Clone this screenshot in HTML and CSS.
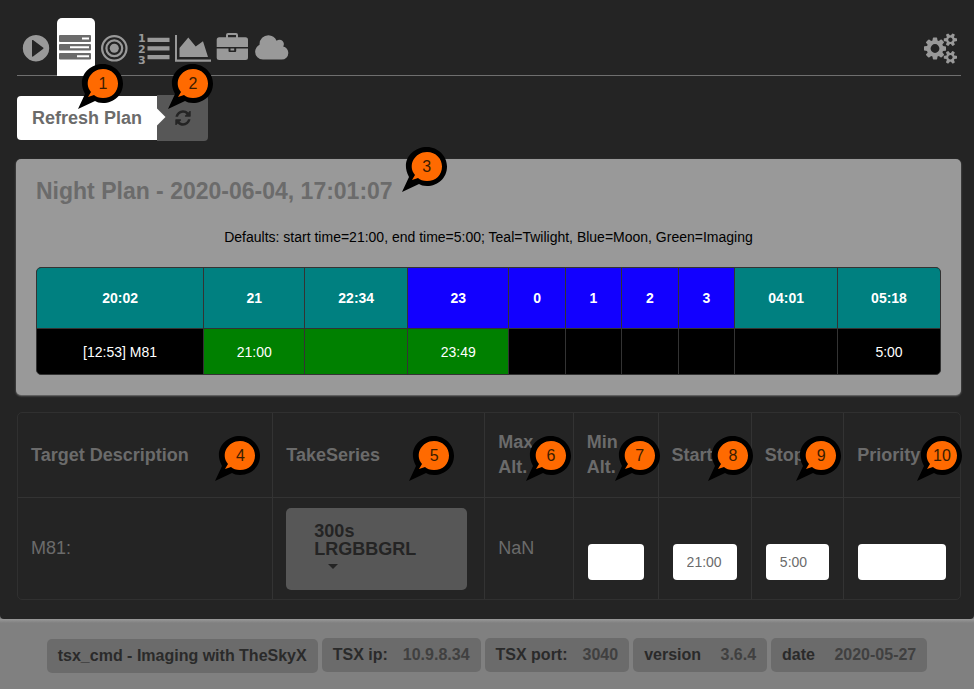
FILE: index.html
```html
<!DOCTYPE html>
<html lang="en">
<head>
<meta charset="utf-8">
<title>tsx_cmd - Night Plan</title>
<link rel="stylesheet" href="styles.css">
</head>
<body>
<svg class="defs" aria-hidden="true">
  <symbol id="bubble" viewBox="0 0 45 45">
    <path fill="#000" d="M0 45 L7 30 C-2 14 10 0 25 0 C36 0 45 9 45 19.500 C45 31 36 39 25 39 C21 39 19 38 17 37 Z"/>
    <path fill="#ff6a00" d="M10 33 L13 28 C5 18 13 5 25 5 C34 5 40 12 40 19.500 C40 28 34 34 25 34 C21 34 18 33 16 31 Z"/>
  </symbol>
</svg>
<main class="page">
  <nav class="nav" aria-label="Main">
    <a class="nav-item" href="#run" aria-label="Run"><svg viewBox="0 0 39 58"><path fill-rule="evenodd" d="M19 17a13.200 13.200 0 1 0 .01 0zM15 22.500v15.500q0 1 1 .500l10-7.500q1-.7 0-1.400l-10-7.500q-1-.5-1 .400z"/></svg></a>
    <a class="nav-item active" href="#plan" aria-label="Plan"><svg viewBox="0 0 39 58"><path fill-rule="evenodd" d="M4 17h30q1 0 1 1v5q0 1-1 1H4q-1 0-1-1v-5q0-1 1-1zM26 19.500v2h7v-2zM4 26h30q1 0 1 1v4.500q0 1-1 1H4q-1 0-1-1V27q0-1 1-1zM14 28.200v2h19v-2zM4 35h30q1 0 1 1v4.500q0 1-1 1H4q-1 0-1-1V36q0-1 1-1zM21 37.200v2h12v-2z"/></svg></a>
    <a class="nav-item" href="#target" aria-label="Target"><svg viewBox="0 0 39 58"><g class="ring"><circle cx="19.300" cy="30.300" r="12.200"/><circle cx="19.300" cy="30.300" r="7.900"/></g><circle cx="19.300" cy="30.300" r="4.500"/></svg></a>
    <a class="nav-item" href="#list" aria-label="List"><svg viewBox="0 0 39 58"><path d="M13.500 19.700h22v4.300h-22zM13.500 28.300h22v4.300h-22zM13.500 37h22v4.300h-22z"/><g class="digits"><text x="4" y="24">1</text><text x="4" y="35">2</text><text x="4" y="46">3</text></g></svg></a>
    <a class="nav-item" href="#chart" aria-label="Chart"><svg viewBox="0 0 39 58"><path d="M2 17h2v24.500h34v2.200H2zM6.500 39v-9l8.800-10.500 7.400 9 7.300-5.200 5 15.700z"/></svg></a>
    <a class="nav-item" href="#tools" aria-label="Tools"><svg viewBox="0 0 39 58"><path fill-rule="evenodd" d="M14 19.300V17q0-2 2-2h8q2 0 2 2v2.300h7.500q2.500 0 2.500 2.500V29H4.700v-7.200q0-2.500 2.500-2.500zM16 17v2.300h8V17zM4.700 30.500H16.500V33q0 1 1 1h5.700q1 0 1-1V30.500H36v9q0 2.500-2.500 2.500H7.200q-2.500 0-2.500-2.500zM18.500 30.500h3.700v2h-3.700z"/></svg></a>
    <a class="nav-item" href="#weather" aria-label="Weather"><svg viewBox="0 0 39 58"><path transform="translate(3 15) scale(.0173)" d="M1984 1152q0 159-112.500 271.500t-271.500 112.500h-1088q-185 0-316.500-131.500t-131.500-316.500q0-132 71-241.500t187-163.500q-2-28-2-43 0-212 150-362t362-150q158 0 286.500 88t187.500 230q70-62 166-62 106 0 181 75t75 181q0 75-41 138 129 30 213 134.500t84 239.500z"/></svg></a>
    <a class="nav-settings" href="#settings" aria-label="Settings"><svg viewBox="0 0 1920 1792"><path d="M896 896q0-106-75-181t-181-75-181 75-75 181 75 181 181 75 181-75 75-181zm768 512q0-52-38-90t-90-38-90 38-38 90q0 53 37.500 90.500t90.500 37.500 90.500-37.500 37.500-90.500zm0-1024q0-52-38-90t-90-38-90 38-38 90q0 53 37.500 90.500t90.500 37.500 90.500-37.500 37.500-90.500zm-384 421v185q0 10-7 19.500t-16 10.500l-155 24q-11 35-32 76 34 48 90 115 7 11 7 20 0 12-7 19-23 30-82.500 89.500t-78.500 59.500q-11 0-21-7l-115-90q-37 19-77 31-11 108-23 155-7 24-30 24h-186q-11 0-20-7.500t-10-17.500l-23-153q-34-10-75-31l-118 89q-7 7-20 7-11 0-21-8-144-133-144-160 0-9 7-19 10-14 41-53t47-61q-23-44-35-82l-152-24q-10-1-17-9.500t-7-19.500v-185q0-10 7-19.500t16-10.500l155-24q11-35 32-76-34-48-90-115-7-11-7-20 0-12 7-20 22-30 82-89t79-59q11 0 21 7l115 90q34-18 77-32 11-108 23-154 7-24 30-24h186q11 0 20 7.500t10 17.500l23 153q34 10 75 31l118-89q8-7 20-7 11 0 21 8 144 133 144 160 0 8-7 19-12 16-42 54t-45 60q23 48 34 82l152 23q10 2 17 10.500t7 19.500zm640 533v140q0 16-149 31-12 27-30 52 51 113 51 138 0 4-4 7-122 71-124 71-8 0-46-47t-52-68q-20 2-30 2t-30-2q-14 21-52 68t-46 47q-2 0-124-71-4-3-4-7 0-25 51-138-18-25-30-52-149-15-149-31v-140q0-16 149-31 13-29 30-52-51-113-51-138 0-4 4-7 4-2 35-20t59-34 30-16q8 0 46 46.500t52 67.500q20-2 30-2t30 2q51-71 92-112l6-2q4 0 124 70 4 3 4 7 0 25-51 138 17 23 30 52 149 15 149 31zm0-1024v140q0 16-149 31-12 27-30 52 51 113 51 138 0 4-4 7-122 71-124 71-8 0-46-47t-52-68q-20 2-30 2t-30-2q-14 21-52 68t-46 47q-2 0-124-71-4-3-4-7 0-25 51-138-18-25-30-52-149-15-149-31v-140q0-16 149-31 13-29 30-52-51-113-51-138 0-4 4-7 4-2 35-20t59-34 30-16q8 0 46 46.500t52 67.500q20-2 30-2t30 2q51-71 92-112l6-2q4 0 124 70 4 3 4 7 0 25-51 138 17 23 30 52 149 15 149 31z"/></svg></a>
  </nav>

  <div class="refresh">
    <label class="refresh-label" for="refresh">Refresh Plan</label>
    <button class="refresh-button" id="refresh" type="button"><svg viewBox="0 0 1792 1792" aria-hidden="true"><path d="M1639 1056q0 5-1 7-64 268-268 434.500t-478 166.500q-146 0-282.500-55t-243.500-157l-129 129q-19 19-45 19t-45-19-19-45v-448q0-26 19-45t45-19h448q26 0 45 19t19 45-19 45l-137 137q71 66 161 102t187 36q134 0 250-65t186-179q11-17 53-117 8-23 30-23h192q13 0 22.500 9.500t9.500 22.500zm25-800v448q0 26-19 45t-45 19h-448q-26 0-45-19t-19-45 19-45l138-138q-148-137-349-137-134 0-250 65t-186 179q-11 17-53 117-8 23-30 23h-199q-13 0-22.500-9.500t-9.500-22.500v-7q65-268 270-434.500t480-166.500q146 0 284 55.500t245 156.500l130-129q19-19 45-19t45 19 19 45z"/></svg></button>
    <span class="marker marker-label"><svg><use href="#bubble"/></svg><b>1</b></span>
    <span class="marker marker-button"><svg><use href="#bubble"/></svg><b>2</b></span>
  </div>

  <section class="night">
    <h1 class="night-title">Night Plan - 2020-06-04, 17:01:07<span class="marker marker-title"><svg><use href="#bubble"/></svg><b>3</b></span></h1>
    <p class="night-note">Defaults: start time=21:00, end time=5:00; Teal=Twilight, Blue=Moon, Green=Imaging</p>
    <table class="timeline">
      <colgroup><col class="c-lead"><col class="c-hour"><col class="c-time"><col class="c-hour"><col class="c-slot" span="4"><col class="c-time" span="2"></colgroup>
      <thead><tr><th class="twilight">20:02</th><th class="twilight">21</th><th class="twilight">22:34</th><th class="moon">23</th><th class="moon">0</th><th class="moon">1</th><th class="moon">2</th><th class="moon">3</th><th class="twilight">04:01</th><th class="twilight">05:18</th></tr></thead>
      <tbody><tr><td>[12:53] M81</td><td class="imaging">21:00</td><td class="imaging"></td><td class="imaging">23:49</td><td></td><td></td><td></td><td></td><td></td><td>5:00</td></tr></tbody>
    </table>
  </section>

  <table class="targets">
    <colgroup><col class="t-name"><col class="t-series"><col class="t-max"><col class="t-min"><col class="t-start"><col class="t-stop"><col class="t-priority"></colgroup>
    <thead><tr>
      <th>Target Description<span class="marker marker-name"><svg><use href="#bubble"/></svg><b>4</b></span></th>
      <th>TakeSeries<span class="marker marker-series"><svg><use href="#bubble"/></svg><b>5</b></span></th>
      <th>Max Alt.<span class="marker marker-inset"><svg><use href="#bubble"/></svg><b>6</b></span></th>
      <th>Min Alt.<span class="marker"><svg><use href="#bubble"/></svg><b>7</b></span></th>
      <th>Start<span class="marker"><svg><use href="#bubble"/></svg><b>8</b></span></th>
      <th>Stop<span class="marker marker-inset"><svg><use href="#bubble"/></svg><b>9</b></span></th>
      <th>Priority<span class="marker"><svg><use href="#bubble"/></svg><b>10</b></span></th>
    </tr></thead>
    <tbody><tr>
      <td>M81:</td>
      <td class="series-cell"><button class="series" type="button" aria-haspopup="listbox"><span>300s LRGBBGRL</span><i class="caret"></i></button></td>
      <td>NaN</td>
      <td><div class="field"><input type="text" aria-label="Minimum altitude"></div></td>
      <td><div class="field"><input type="text" aria-label="Start" placeholder="21:00"></div></td>
      <td><div class="field"><input type="text" aria-label="Stop" placeholder="5:00"></div></td>
      <td><div class="field"><input type="text" aria-label="Priority"></div></td>
    </tr></tbody>
  </table>
</main>
<footer class="footer">
  <span class="tag tag-name">tsx_cmd - Imaging with TheSkyX</span>
  <span class="tag">TSX ip:<span class="detail">10.9.8.34</span></span>
  <span class="tag">TSX port:<span class="detail">3040</span></span>
  <span class="tag">version&nbsp;<span class="detail">3.6.4</span></span>
  <span class="tag">date&nbsp;<span class="detail">2020-05-27</span></span>
</footer>
</body>
</html>
```
FILE: styles.css
```css
* { box-sizing: border-box; }

body {
  margin: 0;
  min-height: 100vh;
  background: #808080;
  font-family: "Liberation Sans", Arial, sans-serif;
  font-size: 14px;
}

.defs { position: absolute; width: 0; height: 0; }

.page {
  padding: 18px 13px 19px 17px;
  background: #242424;
  border-radius: 0 0 4px 4px;
}

/* Navigation */
.nav {
  display: flex;
  height: 58px;
  border-bottom: 1px solid #6f6f6f;
}
.nav-item { width: 39px; height: 58px; fill: #999; }
.nav-item svg { display: block; width: 39px; height: 58px; }
.nav-item.active {
  width: 38px;
  margin-left: 1px;
  border-radius: 5px 5px 0 0;
  background: #fff;
  fill: #6b6b6b;
}
.nav-item.active svg { margin-left: -1px; }
.ring { fill: none; stroke: #999; stroke-width: 2.2; }
.digits { font: bold 11px "DejaVu Sans", sans-serif; }
.nav-settings { margin: 15px 4px 0 auto; fill: #999; }
.nav-settings svg { display: block; width: 33px; height: 31px; }

/* Refresh control */
.refresh {
  position: relative;
  display: flex;
  align-items: center;
  width: max-content;
  margin-top: 19px;
}
.refresh-label {
  position: relative;
  padding: 0 15px;
  border-radius: 4px 0 0 4px;
  background: #fff;
  color: #6b6b6b;
  font-size: 18px;
  font-weight: bold;
  line-height: 44px;
}
.refresh-label::after {
  content: "";
  position: absolute;
  top: 15px;
  right: -6px;
  width: 12px;
  height: 12px;
  background: #fff;
  transform: rotate(45deg);
}
.refresh-button {
  width: 51px;
  height: 46px;
  padding: 0 0 0 1px;
  border: 0;
  border-radius: 0 4px 4px 0;
  background: #575757;
  fill: #242424;
}
.refresh-button svg { display: block; width: 18px; height: 18px; margin: 0 auto; }

/* Numbered callouts */
.marker {
  position: absolute;
  z-index: 2;
  top: 23px;
  right: -2px;
  width: 45px;
  height: 45px;
}
.marker svg { display: block; width: 45px; height: 45px; }
.marker b {
  position: absolute;
  top: 0;
  left: 5px;
  width: 40px;
  color: #3a1c00;
  font-size: 16px;
  font-weight: normal;
  line-height: 40px;
  text-align: center;
}
.marker-label { top: -31px; left: 61px; }
.marker-button { top: -31px; left: 151px; }
.marker-title { top: -32px; right: -54px; }
.marker-name { right: 12px; }
.marker-series { right: 30px; }
.marker-inset { right: 2px; }

/* Night plan */
.night {
  margin: 18px 0 0 -1px;
  padding: 20px;
  border-radius: 5px;
  background: #999;
  box-shadow: 0 1px 2px #777;
}
.night-title {
  position: relative;
  width: max-content;
  margin: 0;
  color: #6b6b6b;
  font-size: 23px;
  line-height: 24px;
}
.night-note {
  margin: 25px 0 21px;
  color: #000;
  line-height: 18px;
  text-align: center;
}
.timeline {
  width: 100%;
  table-layout: fixed;
  border: 1px solid #333;
  border-spacing: 0;
  border-radius: 5px;
  background: #000;
  color: #fff;
  overflow: hidden;
}
.c-lead { width: 18.4%; }
.c-hour { width: 11.2%; }
.c-time { width: 11.4%; }
.c-slot { width: 6.25%; }
.timeline th, .timeline td {
  padding: 0;
  border-left: 1px solid #333;
  text-align: center;
}
.timeline th:first-child, .timeline td:first-child { border-left: 0; }
.timeline th { height: 60px; }
.timeline td { height: 46px; border-top: 1px solid #333; }
.twilight { background: #008080; }
.moon { background: #1200ff; }
.imaging { background: #008000; }

/* Target list */
.targets {
  width: 100%;
  margin-top: 17px;
  table-layout: fixed;
  border: 1px solid #303030;
  border-spacing: 0;
  border-radius: 5px;
  color: #6b6b6b;
  font-size: 18px;
  line-height: 25px;
}
.t-name { width: 27%; }
.t-series { width: 22.5%; }
.t-max { width: 9.4%; }
.t-min { width: 9%; }
.t-start { width: 9.9%; }
.t-stop { width: 9.8%; }
.t-priority { width: 12.4%; }
.targets th, .targets td {
  padding: 0 13px;
  border-left: 1px solid #333;
  text-align: left;
}
.targets th:first-child, .targets td:first-child { border-left: 0; }
.targets th { position: relative; height: 84px; }
.targets td { height: 102px; border-top: 1px solid #333; }
.targets .series-cell { padding-right: 17px; }
.series {
  display: block;
  width: 100%;
  height: 82px;
  padding: 0 28px 6px;
  border: 0;
  border-radius: 5px;
  background: #575757;
  color: #242424;
  font: bold 18px/18px "Liberation Sans", Arial, sans-serif;
  text-align: left;
}
.series span { display: block; }
.caret {
  display: block;
  width: 10px;
  margin: 6px 0 0 14px;
  border: 5px solid transparent;
  border-top-color: #242424;
  border-bottom: 0;
}
.field { padding: 26px 1px 0; }
.field input {
  display: block;
  width: 100%;
  height: 36px;
  padding: 0 14px;
  border: 0;
  border-radius: 4px;
  background: #fff;
  font: 14px "Liberation Sans", Arial, sans-serif;
}
.field input::placeholder { color: #6b6b6b; opacity: 1; }

/* Footer */
.footer {
  display: flex;
  justify-content: center;
  gap: 4px;
  padding: 19px 13px 16px;
  background: linear-gradient(#999, #808080 4px);
}
.tag {
  padding: 0 11px;
  border-radius: 5px;
  background: #6b6b6b;
  color: #2a2a2a;
  font-size: 16px;
  font-weight: bold;
  line-height: 34px;
  white-space: nowrap;
}
.tag-name { position: relative; top: 1px; }
.detail { margin-left: 15px; color: #404040; }
```
